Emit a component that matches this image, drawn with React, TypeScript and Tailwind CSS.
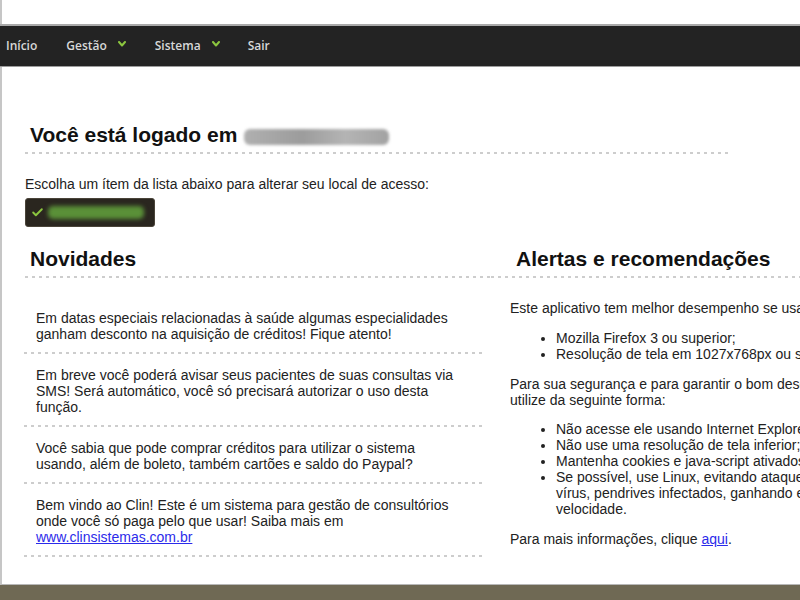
import React from "react";
import { Check } from "lucide-react";

const dotted =
  "h-[2px] bg-[repeating-linear-gradient(to_right,#cdcdcd_0px,#cdcdcd_3px,transparent_3px,transparent_7px)]";

function Chevron() {
  return (
    <svg width="8" height="6" viewBox="0 0 8 6" className="ml-[11px] -mt-[4px]">
      <path d="M1 1 L4 4.5 L7 1" fill="none" stroke="#8cc63f" strokeWidth="2" strokeLinecap="round" strokeLinejoin="round" />
    </svg>
  );
}

const news: React.ReactNode[] = [
  "Em datas especiais relacionadas à saúde algumas especialidades ganham desconto na aquisição de créditos! Fique atento!",
  "Em breve você poderá avisar seus pacientes de suas consultas via SMS! Será automático, você só precisará autorizar o uso desta função.",
  "Você sabia que pode comprar créditos para utilizar o sistema usando, além de boleto, também cartões e saldo do Paypal?",
  <>
    Bem vindo ao Clin! Este é um sistema para gestão de consultórios onde você só paga pelo que usar! Saiba mais em{" "}
    <a href="#" className="text-[#2b2bea] underline">www.clinsistemas.com.br</a>
  </>,
];

export default function App() {
  return (
    <div className="w-[800px] h-[600px] overflow-hidden flex flex-col bg-white text-[#222] font-['Liberation_Sans',Arial,sans-serif]">
      <div className="h-[24px] shrink-0 border-l-2 border-[#c6c6c6] bg-white" />
      <nav className="h-[43px] shrink-0 bg-[#232323] border-t-2 border-[#a9a9a9] border-b border-b-[#9c9c9c] flex items-center pl-[6px] gap-[29px] text-[12px] font-semibold text-[#d8d8d8] font-['Open_Sans',sans-serif]">
        <span>Início</span>
        <span className="flex items-center">Gestão<Chevron /></span>
        <span className="flex items-center">Sistema<Chevron /></span>
        <span className="-ml-px">Sair</span>
      </nav>
      <main className="flex-1 border-l-2 border-[#c6c6c6] border-b border-b-[#b8b8b8] pl-[23px] min-h-0">
        <div className="mt-[56px] pl-[5px] pb-[5px] flex items-center h-[24px] box-content">
          <h1 className="text-[21px] leading-[24px] font-bold text-[#111]">Você está logado em</h1>
          <span className="ml-[7px] inline-block w-[145px] h-[16px] mt-[4px] rounded-[6px] bg-[linear-gradient(to_right,#b0b0b0,#9c9c9c_40%,#b4b4b4_70%,#a2a2a2)] blur-[1.5px]" />
        </div>
        <div className={`${dotted} w-[705px]`} />
        <p className="mt-[22px] text-[14px] leading-[16px]">
          Escolha um ítem da lista abaixo para alterar seu local de acesso:
        </p>
        <div className="mt-[6px] w-[130px] h-[29px] rounded-[3px] bg-[#2a261f] border border-[#4a4439] flex items-center pl-[5px]">
          <Check size={13} strokeWidth={3.5} className="text-[#8cc63f]" />
          <span className="ml-[4px] w-[96px] h-[13px] rounded-[5px] bg-[#5a9038] blur-[2px]" />
        </div>

        <div className="flex mt-[20px]">
          <section className="w-[466px] shrink-0">
            <h2 className="pl-[5px] pb-[5px] text-[21px] leading-[24px] font-bold text-[#111]">Novidades</h2>
            <div className={dotted} />
            <ul className="mt-[19px] mr-[6px] -ml-px">
              {news.map((n, i) => (
                <li key={i} className="pl-[12px] pr-[24px] pt-[13px] pb-[10px] text-[14px] leading-[16px]">
                  {n}
                  <div className={`${dotted} mt-[10px] -mb-[10px] -ml-[12px] -mr-[24px] h-[1px]`} />
                </li>
              ))}
            </ul>
          </section>

          <section className="w-[375px] shrink-0">
            <h2 className="pl-[25px] pb-[5px] text-[21px] leading-[24px] font-bold text-[#111]">Alertas e recomendações</h2>
            <div className={dotted} />
            <div className="pl-[19px] text-[14px] leading-[16px]">
              <p className="mt-[22px]">Este aplicativo tem melhor desempenho se usado com:</p>
              <ul className="mt-[14px] pl-[46px] list-disc">
                <li>Mozilla Firefox 3 ou superior;</li>
                <li>Resolução de tela em 1027x768px ou superior.</li>
              </ul>
              <p className="mt-[14px]">Para sua segurança e para garantir o bom desempenho, utilize da seguinte forma:</p>
              <ul className="mt-[13px] pl-[46px] list-disc">
                <li>Não acesse ele usando Internet Explorer;</li>
                <li>Não use uma resolução de tela inferior;</li>
                <li>Mantenha cookies e java-script ativados;</li>
                <li>Se possível, use Linux, evitando ataques dos vírus, pendrives infectados, ganhando em velocidade.</li>
              </ul>
              <p className="mt-[14px]">
                Para mais informações, clique <a href="#" className="text-[#2b2bea] underline">aqui</a>.
              </p>
            </div>
          </section>
        </div>
      </main>
      <footer className="h-[15px] shrink-0 bg-[#6f6954]" />
    </div>
  );
}
